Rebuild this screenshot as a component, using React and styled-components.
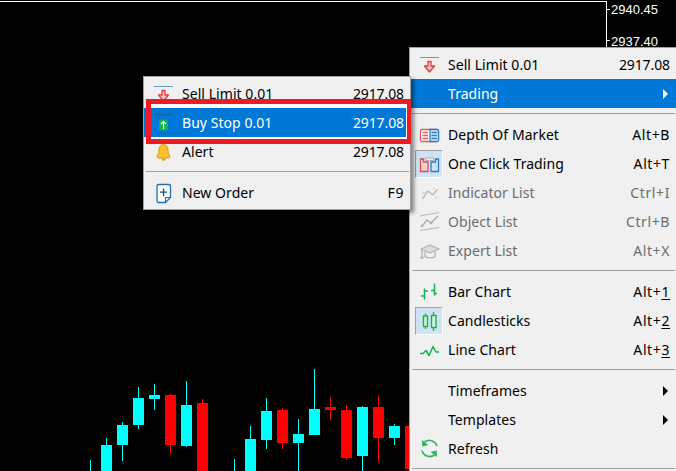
import React from 'react';
import styled, { createGlobalStyle } from 'styled-components';

const GlobalStyle = createGlobalStyle`
  html, body { margin: 0; padding: 0; background: #000; }
`;

const Screen = styled.div`
  position: relative;
  width: 676px;
  height: 471px;
  overflow: hidden;
  background: #000;
  font-family: "Noto Sans", "Open Sans", sans-serif;
`;

const ChartCanvas = styled.svg`
  display: block;
  width: 676px;
  height: 471px;
`;

const PriceText = styled.text`
  fill: #fff;
  font-family: "Liberation Sans", sans-serif;
  font-size: 13px;
`;

const Menu = styled.div`
  position: absolute;
  left: ${(p) => p.$left}px;
  top: ${(p) => p.$top}px;
  width: 266px;
  padding: 2px 0;
  background: #f0f0f0;
  border: 1px solid #a0a0a0;
  box-shadow: 3px 3px 4px rgba(0, 0, 0, 0.45);
`;

const Row = styled.div`
  display: flex;
  align-items: center;
  height: 29px;
  padding: 0 6px 0 5px;
  font-size: 14px;
  letter-spacing: 0.05px;
  color: ${(p) => (p.$active ? '#fff' : p.$disabled ? '#6d6d6d' : '#000')};
  background: ${(p) => (p.$active ? '#0078d7' : 'transparent')};
`;

const IconSlot = styled.span`
  display: flex;
  align-items: center;
  justify-content: center;
  flex: none;
  box-sizing: border-box;
  width: 28px;
  height: 28px;
  margin-right: 5px;
  ${(p) => p.$checked && `
    background: #cfe3f5;
    border: 1px solid;
    border-color: #a0a0a0 #fff #fff #a0a0a0;
  `}
`;

const Label = styled.span`
  flex: 1;
`;

const Price = styled.span`
  flex: none;
  letter-spacing: -0.1px;
`;

const Shortcut = styled.span`
  flex: none;
  letter-spacing: 0.6px;
  u { text-underline-offset: 2px; }
`;

const SubArrow = styled.span`
  flex: none;
  width: 0;
  height: 0;
  margin-right: 2px;
  border-left: 5px solid ${(p) => (p.$active ? '#fff' : '#000')};
  border-top: 5px solid transparent;
  border-bottom: 5px solid transparent;
`;

const Separator = styled.div`
  height: 12px;
  padding-top: 5px;
  box-sizing: border-box;
  &::before {
    content: '';
    display: block;
    height: 1px;
    margin: 0 1px 0 2px;
    background: #a0a0a0;
  }
`;

const RedFrame = styled.div`
  position: absolute;
  left: 146px;
  top: 99px;
  box-sizing: border-box;
  width: 265px;
  height: 45px;
  border: solid #ed1c24;
  border-width: 5px 4px 5px 5px;
`;

const RedFrameInner = styled.div`
  box-sizing: border-box;
  height: 100%;
  border: solid #fff;
  border-width: 4px 1px 2px 0;
`;

const Svg = ({ children }) => (
  <svg width="24" height="24" viewBox="0 0 24 24" fill="none">{children}</svg>
);

const SellLimitIcon = () => (
  <Svg>
    <path d="M3 4.500h19" stroke="#6a9bd0" strokeWidth="1" />
    <path d="M11 8.500h3v4.500h3.500l-5 6-5-6H11z" fill="#f9c4c4" stroke="#e0393e" strokeWidth="1.300" strokeLinejoin="round" />
  </Svg>
);

const BuyStopIcon = () => (
  <Svg>
    <path d="M3 3.500h18" stroke="#1b5a9e" strokeWidth="1" />
    <rect x="8" y="8.500" width="9" height="11" rx="2" fill="#12b24a" />
    <path d="M12.500 18v-7.500M10 13l2.500-2.500 2.500 2.500" stroke="#fff" strokeWidth="1.200" />
  </Svg>
);

const BellIcon = () => (
  <Svg>
    <path d="M12.500 4.500c-3.400 0-4.500 3-4.500 5.500 0 3.500-1.500 5-2 6.500 0 1.200 1 1.500 3 1.500h7c2 0 3-.3 3-1.500-.5-1.500-2-3-2-6.500 0-2.500-1.100-5.500-4.500-5.500z" fill="#fbc02d" stroke="#e09a10" strokeWidth="1" />
    <path d="M10 18.500c.3 1.500 1.300 2.300 2.500 2.300s2.200-.8 2.500-2.300z" fill="#e8a317" />
  </Svg>
);

const NewOrderIcon = () => (
  <Svg>
    <path d="M7.500 3.500h10.500a1.500 1.500 0 0 1 1.500 1.500v11.500l-5 5H7.500A1.500 1.500 0 0 1 6 20V5a1.500 1.500 0 0 1 1.500-1.500z" fill="#fff" stroke="#1f6fb5" strokeWidth="1.300" />
    <path d="M14.500 21.500v-5h5" stroke="#1f6fb5" strokeWidth="1" />
    <path d="M12.500 7.500v7.500M9 11.200h7" stroke="#1a4f86" strokeWidth="1.300" />
  </Svg>
);

const DepthIcon = () => (
  <Svg>
    <rect x="3.500" y="6.500" width="18" height="12" rx="1.500" fill="#fff" stroke="#e65a5e" strokeWidth="1.300" />
    <path d="M13 6.500h7a1.500 1.500 0 0 1 1.500 1.500v9a1.500 1.500 0 0 1-1.500 1.500h-7z" fill="#dceaf7" stroke="#2b7cc4" strokeWidth="1.300" />
    <path d="M5.500 9.500h5.500M5.500 12.500h5.500M5.500 15.500h5.500" stroke="#e65a5e" strokeWidth="1.300" />
    <path d="M14.500 9.500h5.500M14.500 12.500h5.500M14.500 15.500h5.500" stroke="#2b7cc4" strokeWidth="1.300" />
  </Svg>
);

const OneClickIcon = () => (
  <Svg>
    <path d="M3.500 7h3v3h4.500v9.500H3.500z" fill="#fbd3d3" stroke="#e0484c" strokeWidth="1.300" />
    <path d="M21.500 7h-3v3H14v9.500h7.500z" fill="#c9e3f7" stroke="#2b7cc4" strokeWidth="1.300" />
    <rect x="8.500" y="6" width="8" height="2.500" fill="#e8eaec" stroke="#a2a8ae" strokeWidth="0.800" />
  </Svg>
);

const IndicatorIcon = () => (
  <Svg>
    <path d="M5 17.500c3 0 3-7 6-7s3 4 5 3 2-4 5-5" stroke="#b5b5b5" strokeWidth="1.300" />
    <path d="M5 12.500l2.500-1M16 8l2-1M18 17l2.500-1" stroke="#c8c8c8" strokeWidth="1" />
  </Svg>
);

const ObjectIcon = () => (
  <Svg>
    <path d="M3 6l19-3.500M3 20.500l19-3" stroke="#b5b5b5" strokeWidth="1" />
    <path d="M5 16l5-6 4 3 7-7" stroke="#b0b0b0" strokeWidth="1.500" />
    <circle cx="5" cy="16" r="1.300" fill="#b0b0b0" />
    <circle cx="14" cy="13" r="1.300" fill="#b0b0b0" />
  </Svg>
);

const ExpertIcon = () => (
  <Svg>
    <path d="M13 6l9 4-9 4-9-4z" fill="#dcdcdc" stroke="#b0b0b0" strokeWidth="1.200" strokeLinejoin="round" />
    <path d="M8 13v4.500c2 2 8 2 10 0V13" stroke="#b0b0b0" strokeWidth="1.200" />
    <path d="M5 11v6" stroke="#b0b0b0" strokeWidth="1.200" />
    <circle cx="5" cy="18.500" r="1.500" fill="#b0b0b0" />
  </Svg>
);

const BarChartIcon = () => (
  <Svg>
    <path d="M7.500 8.500v11M17.500 3.500v12" stroke="#12b54a" strokeWidth="1.500" />
    <path d="M4 16h3.500M7.500 11H11M14 10.500h3.500M17.500 13.500H20" stroke="#12b54a" strokeWidth="1.500" />
  </Svg>
);

const CandleIcon = () => (
  <Svg>
    <path d="M8.500 4.500v15.500M16.500 3v19" stroke="#12b54a" strokeWidth="1.300" />
    <rect x="6.500" y="7" width="4" height="10.500" fill="#d9f3df" stroke="#12b54a" strokeWidth="1.400" />
    <rect x="14.500" y="6.500" width="4.500" height="12" fill="#d9f3df" stroke="#12b54a" strokeWidth="1.400" />
  </Svg>
);

const LineChartIcon = () => (
  <Svg>
    <path d="M3 15.500h3l3-3 3 5 4-9 3 5.500h3" stroke="#12b54a" strokeWidth="1.500" strokeLinejoin="round" />
  </Svg>
);

const RefreshIcon = () => (
  <Svg>
    <path d="M20 9A8 8 0 0 0 7.500 5" stroke="#2db55d" strokeWidth="1.600" />
    <path d="M5 3l.3 6.500 6-1.500z" fill="#2db55d" />
    <path d="M5 13.500A8 8 0 0 0 17.500 18" stroke="#2db55d" strokeWidth="1.600" />
    <path d="M20 20l-.3-6.500-6 1.500z" fill="#2db55d" />
  </Svg>
);

const sep = { sep: true };

const mainItems = [
  { label: 'Sell Limit 0.01', price: '2917.08', icon: <SellLimitIcon /> },
  { label: 'Trading', active: true, sub: true },
  sep,
  { label: 'Depth Of Market', keys: 'Alt+B', icon: <DepthIcon /> },
  { label: 'One Click Trading', keys: 'Alt+T', icon: <OneClickIcon />, checked: true },
  { label: 'Indicator List', keys: 'Ctrl+I', icon: <IndicatorIcon />, disabled: true },
  { label: 'Object List', keys: 'Ctrl+B', icon: <ObjectIcon />, disabled: true },
  { label: 'Expert List', keys: 'Alt+X', icon: <ExpertIcon />, disabled: true },
  sep,
  { label: 'Bar Chart', keys: <>Alt+<u>1</u></>, icon: <BarChartIcon /> },
  { label: 'Candlesticks', keys: <>Alt+<u>2</u></>, icon: <CandleIcon />, checked: true },
  { label: 'Line Chart', keys: <>Alt+<u>3</u></>, icon: <LineChartIcon /> },
  sep,
  { label: 'Timeframes', sub: true },
  { label: 'Templates', sub: true },
  { label: 'Refresh', icon: <RefreshIcon /> },
  sep,
];

const orderItems = [
  { label: 'Sell Limit 0.01', price: '2917.08', icon: <SellLimitIcon /> },
  { label: 'Buy Stop 0.01', price: '2917.08', icon: <BuyStopIcon />, active: true },
  { label: 'Alert', price: '2917.08', icon: <BellIcon /> },
  sep,
  { label: 'New Order', keys: 'F9', icon: <NewOrderIcon /> },
];

// [wick x, wick top, wick bottom, body top, body bottom, colour]
const CYAN = '#00ffff';
const RED = '#ff0000';
const candles = [
  [106, 438, 471, 445, 471, CYAN],
  [122, 422, 461, 425, 445, CYAN],
  [138, 387, 429, 398, 425, CYAN],
  [154, 384, 410, 395, 399, CYAN],
  [170, 394, 454, 395, 445, RED],
  [186, 381, 447, 405, 446, CYAN],
  [202, 399, 471, 403, 471, RED],
  [250, 426, 471, 439, 471, CYAN],
  [266, 398, 449, 411, 440, CYAN],
  [282, 408, 449, 410, 443, RED],
  [298, 419, 471, 434, 443, CYAN],
  [314, 369, 435, 409, 435, CYAN],
  [330, 397, 420, 407, 410, RED],
  [346, 405, 460, 410, 458, RED],
  [362, 406, 471, 407, 456, CYAN],
  [378, 396, 462, 407, 438, RED],
  [394, 424, 445, 426, 438, CYAN],
  [410, 426, 469, 426, 469, RED],
];

const Chart = () => (
  <ChartCanvas viewBox="0 0 676 471">
    <rect x="0" y="1" width="607" height="1" fill="#fff" />
    <rect x="606" y="1" width="1" height="60" fill="#fff" />
    <rect x="606" y="9" width="4" height="1" fill="#fff" />
    <rect x="606" y="40" width="4" height="1" fill="#fff" />
    <PriceText x="611" y="14">2940.45</PriceText>
    <PriceText x="611" y="46">2937.40</PriceText>
    <rect x="90" y="460" width="1" height="11" fill={CYAN} />
    <rect x="234" y="459" width="1" height="12" fill={CYAN} />
    {candles.map(([x, wt, wb, bt, bb, c]) => (
      <g key={x} fill={c}>
        <rect x={x} y={wt} width="1" height={wb - wt} />
        <rect x={x - 5} y={bt} width="11" height={bb - bt} />
      </g>
    ))}
  </ChartCanvas>
);

const MenuList = ({ items, left, top }) => (
  <Menu $left={left} $top={top}>
    {items.map((item, i) =>
      item.sep ? (
        <Separator key={i} />
      ) : (
        <Row key={i} $active={item.active} $disabled={item.disabled}>
          <IconSlot $checked={item.checked}>{item.icon}</IconSlot>
          <Label>{item.label}</Label>
          {item.price && <Price>{item.price}</Price>}
          {item.keys && <Shortcut>{item.keys}</Shortcut>}
          {item.sub && <SubArrow $active={item.active} />}
        </Row>
      )
    )}
  </Menu>
);

export default function App() {
  return (
    <Screen>
      <GlobalStyle />
      <Chart />
      <MenuList items={mainItems} left={409} top={47} />
      <MenuList items={orderItems} left={143} top={76} />
      <RedFrame>
        <RedFrameInner />
      </RedFrame>
    </Screen>
  );
}
